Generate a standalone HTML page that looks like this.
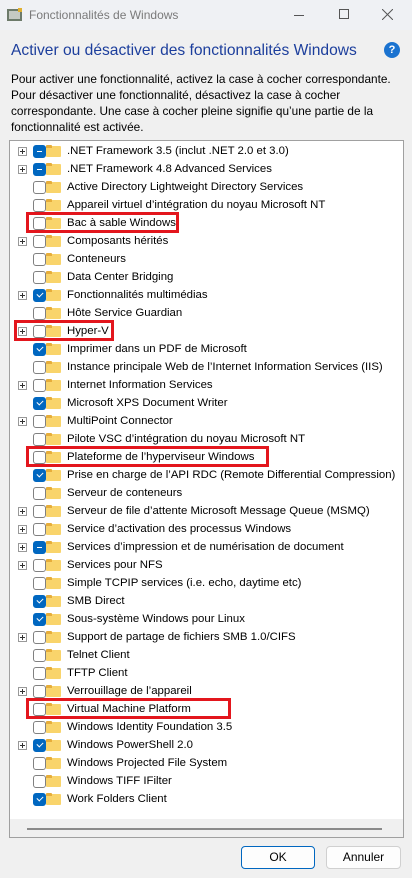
<!DOCTYPE html>
<html><head><meta charset="utf-8"><style>
*{margin:0;padding:0;box-sizing:border-box}
body{width:412px;height:878px;background:#f0f0f0;font-family:"Liberation Sans",sans-serif;position:relative;overflow:hidden;color:#000}
.tb{position:absolute;left:0;top:0;width:412px;height:30px;background:#eff1f4}
.tt{position:absolute;left:29px;top:8px;font-size:12px;color:#7a7a7a}
.h{position:absolute;left:11px;top:42px;font-size:15.6px;color:#1c3e9c}
.p{position:absolute;left:11px;top:71px;font-size:11.8px;line-height:16px;width:395px}
.list{position:absolute;left:9px;top:140px;width:395px;height:698px;background:#fff;border:1px solid #a0a0a0;overflow:hidden}
.row{position:absolute;left:0;height:18px;width:420px}
.pl{position:absolute;left:8px;top:5px;width:9px;height:9px;border:1px solid #999;background:#fff}
.pl:before{content:"";position:absolute;left:1px;top:3px;width:5px;height:1px;background:#333}
.pl:after{content:"";position:absolute;left:3px;top:1px;width:1px;height:5px;background:#333}
.cb{position:absolute;left:23px;top:3px;width:13px;height:13px;border:1px solid #808080;border-radius:3px;background:#fff}
.cb.c,.cb.pt{background:#0067c0;border-color:#0067c0}
.cb.pt:after{content:"";position:absolute;left:3px;top:5px;width:5px;height:1px;background:#fff}
.cb.c:after{content:"";position:absolute;left:3px;top:2px;width:5px;height:3px;border-left:1px solid #fff;border-bottom:1px solid #fff;transform:rotate(-45deg)}
.f{position:absolute;left:36px;top:4px;width:15px;height:11px;background:#f9d46b;border-radius:1px}
.f:before{content:"";position:absolute;left:0;top:-1px;width:6px;height:3px;background:#e6ad3a;border-radius:1px 1px 0 0}
.t{position:absolute;left:57px;top:3px;font-size:11.4px;white-space:nowrap}
.red{position:absolute;border:3px solid #e3161d}
.sb{position:absolute;left:0;top:678px;width:395px;height:20px;background:#f0f0f0}
.sb i{position:absolute;left:17px;top:9px;width:355px;height:2px;background:#8a8a8a}
.btn{position:absolute;top:846px;height:23px;border:1px solid #d0d0d0;border-radius:4px;background:#fdfdfd;font-size:12px;text-align:center;line-height:21px}
</style></head><body>
<div class="tb">
<svg style="position:absolute;left:7px;top:8px" width="16" height="14"><rect x="0" y="1" width="15" height="12" fill="#6c7a6a"/><rect x="2" y="3" width="11" height="8" fill="#c5c9c2"/><rect x="11" y="0" width="4" height="4" fill="#e0b030"/></svg>
<div class="tt">Fonctionnalités de Windows</div>
<div style="position:absolute;left:294px;top:15px;width:10px;height:1px;background:#555"></div>
<div style="position:absolute;left:339px;top:9px;width:10px;height:10px;border:1px solid #555"></div>
<svg style="position:absolute;left:382px;top:9px" width="11" height="11"><path d="M0 0L11 11M11 0L0 11" stroke="#555" stroke-width="1"/></svg>
</div>
<div class="h">Activer ou désactiver des fonctionnalités Windows</div>
<div style="position:absolute;left:384px;top:42px;width:16px;height:16px;border-radius:50%;background:#1b73d0;color:#fff;font-size:11px;font-weight:bold;text-align:center;line-height:16px">?</div>
<div class="p">Pour activer une fonctionnalité, activez la case à cocher correspondante. Pour désactiver une fonctionnalité, désactivez la case à cocher correspondante. Une case à cocher pleine signifie qu’une partie de la fonctionnalité est activée.</div>
<div class="list">
<div class="row" style="top:1px"><i class="pl"></i><i class="cb pt"></i><i class="f"></i><span class="t">.NET Framework 3.5 (inclut .NET 2.0 et 3.0)</span></div>
<div class="row" style="top:19px"><i class="pl"></i><i class="cb pt"></i><i class="f"></i><span class="t">.NET Framework 4.8 Advanced Services</span></div>
<div class="row" style="top:37px"><i class="cb"></i><i class="f"></i><span class="t">Active Directory Lightweight Directory Services</span></div>
<div class="row" style="top:55px"><i class="cb"></i><i class="f"></i><span class="t">Appareil virtuel d’intégration du noyau Microsoft NT</span></div>
<div class="row" style="top:73px"><i class="cb"></i><i class="f"></i><span class="t">Bac à sable Windows</span></div>
<div class="row" style="top:91px"><i class="pl"></i><i class="cb"></i><i class="f"></i><span class="t">Composants hérités</span></div>
<div class="row" style="top:109px"><i class="cb"></i><i class="f"></i><span class="t">Conteneurs</span></div>
<div class="row" style="top:127px"><i class="cb"></i><i class="f"></i><span class="t">Data Center Bridging</span></div>
<div class="row" style="top:145px"><i class="pl"></i><i class="cb c"></i><i class="f"></i><span class="t">Fonctionnalités multimédias</span></div>
<div class="row" style="top:163px"><i class="cb"></i><i class="f"></i><span class="t">Hôte Service Guardian</span></div>
<div class="row" style="top:181px"><i class="pl"></i><i class="cb"></i><i class="f"></i><span class="t">Hyper-V</span></div>
<div class="row" style="top:199px"><i class="cb c"></i><i class="f"></i><span class="t">Imprimer dans un PDF de Microsoft</span></div>
<div class="row" style="top:217px"><i class="cb"></i><i class="f"></i><span class="t">Instance principale Web de l’Internet Information Services (IIS)</span></div>
<div class="row" style="top:235px"><i class="pl"></i><i class="cb"></i><i class="f"></i><span class="t">Internet Information Services</span></div>
<div class="row" style="top:253px"><i class="cb c"></i><i class="f"></i><span class="t">Microsoft XPS Document Writer</span></div>
<div class="row" style="top:271px"><i class="pl"></i><i class="cb"></i><i class="f"></i><span class="t">MultiPoint Connector</span></div>
<div class="row" style="top:289px"><i class="cb"></i><i class="f"></i><span class="t">Pilote VSC d’intégration du noyau Microsoft NT</span></div>
<div class="row" style="top:307px"><i class="cb"></i><i class="f"></i><span class="t">Plateforme de l’hyperviseur Windows</span></div>
<div class="row" style="top:325px"><i class="cb c"></i><i class="f"></i><span class="t">Prise en charge de l’API RDC (Remote Differential Compression)</span></div>
<div class="row" style="top:343px"><i class="cb"></i><i class="f"></i><span class="t">Serveur de conteneurs</span></div>
<div class="row" style="top:361px"><i class="pl"></i><i class="cb"></i><i class="f"></i><span class="t">Serveur de file d’attente Microsoft Message Queue (MSMQ)</span></div>
<div class="row" style="top:379px"><i class="pl"></i><i class="cb"></i><i class="f"></i><span class="t">Service d’activation des processus Windows</span></div>
<div class="row" style="top:397px"><i class="pl"></i><i class="cb pt"></i><i class="f"></i><span class="t">Services d’impression et de numérisation de document</span></div>
<div class="row" style="top:415px"><i class="pl"></i><i class="cb"></i><i class="f"></i><span class="t">Services pour NFS</span></div>
<div class="row" style="top:433px"><i class="cb"></i><i class="f"></i><span class="t">Simple TCPIP services (i.e. echo, daytime etc)</span></div>
<div class="row" style="top:451px"><i class="cb c"></i><i class="f"></i><span class="t">SMB Direct</span></div>
<div class="row" style="top:469px"><i class="cb c"></i><i class="f"></i><span class="t">Sous-système Windows pour Linux</span></div>
<div class="row" style="top:487px"><i class="pl"></i><i class="cb"></i><i class="f"></i><span class="t">Support de partage de fichiers SMB 1.0/CIFS</span></div>
<div class="row" style="top:505px"><i class="cb"></i><i class="f"></i><span class="t">Telnet Client</span></div>
<div class="row" style="top:523px"><i class="cb"></i><i class="f"></i><span class="t">TFTP Client</span></div>
<div class="row" style="top:541px"><i class="pl"></i><i class="cb"></i><i class="f"></i><span class="t">Verrouillage de l’appareil</span></div>
<div class="row" style="top:559px"><i class="cb"></i><i class="f"></i><span class="t">Virtual Machine Platform</span></div>
<div class="row" style="top:577px"><i class="cb"></i><i class="f"></i><span class="t">Windows Identity Foundation 3.5</span></div>
<div class="row" style="top:595px"><i class="pl"></i><i class="cb c"></i><i class="f"></i><span class="t">Windows PowerShell 2.0</span></div>
<div class="row" style="top:613px"><i class="cb"></i><i class="f"></i><span class="t">Windows Projected File System</span></div>
<div class="row" style="top:631px"><i class="cb"></i><i class="f"></i><span class="t">Windows TIFF IFilter</span></div>
<div class="row" style="top:649px"><i class="cb c"></i><i class="f"></i><span class="t">Work Folders Client</span></div>
<div class="sb"><i></i></div>
</div>
<div class="red" style="left:26px;top:212px;width:153px;height:21px"></div>
<div class="red" style="left:14px;top:320px;width:100px;height:21px"></div>
<div class="red" style="left:26px;top:446px;width:243px;height:21px"></div>
<div class="red" style="left:26px;top:698px;width:205px;height:21px"></div>
<div class="btn" style="left:241px;width:74px;border-color:#0067c0">OK</div>
<div class="btn" style="left:326px;width:75px">Annuler</div>
</body></html>
